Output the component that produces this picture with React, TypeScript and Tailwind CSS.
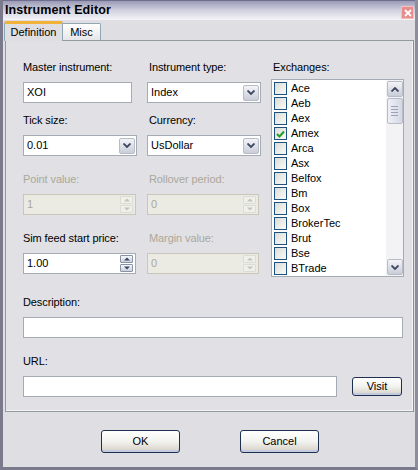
import React from "react";

const font = "font-['Liberation_Sans','Arial',sans-serif]";

function Label({ children, disabled }: { children: React.ReactNode; disabled?: boolean }) {
  return (
    <div className={`h-[14px] text-[11px] leading-[14px] tracking-[-0.1px] ${disabled ? "text-[#aca899]" : "text-black"}`}>
      {children}
    </div>
  );
}

function TextBox({ value, w }: { value?: string; w: string }) {
  return (
    <div className={`${w} h-[21px] border border-[#a5acb5] bg-white flex items-center pl-[3px] text-[11px]`}>
      {value}
    </div>
  );
}

function Chevron({ up, color = "#4d6185" }: { up?: boolean; color?: string }) {
  return (
    <svg width="8" height="5" viewBox="0 0 8 5" className={up ? "rotate-180" : ""}>
      <path d="M0.5 0.5 L4 4 L7.5 0.5" fill="none" stroke={color} strokeWidth="1.8" />
    </svg>
  );
}

function ScrollBtn({ up }: { up?: boolean }) {
  return (
    <div className="w-[16px] h-[16px] rounded-[2px] border border-[#b8bcc6] bg-gradient-to-b from-[#f3f4f8] to-[#c9cdd8] flex items-center justify-center">
      <Chevron up={up} color="#3c4660" />
    </div>
  );
}

function Combo({ value }: { value: string }) {
  return (
    <div className="w-[114px] h-[21px] border border-[#a5acb5] bg-white flex items-center pl-[3px] pr-[1px] text-[11px]">
      <span className="flex-1">{value}</span>
      <ScrollBtn />
    </div>
  );
}

function Spin({ value, disabled, w = "w-[113px]" }: { value: string; disabled?: boolean; w?: string }) {
  const c = disabled ? "#c3c3bf" : "#3c4660";
  return (
    <div
      className={`${w} h-[21px] border flex items-center pl-[3px] pr-[2px] text-[11px] ${
        disabled ? "border-[#c9c7ba] bg-[#ebebe4] text-[#aca899]" : "border-[#a5acb5] bg-white text-black"
      }`}
    >
      <span className="flex-1">{value}</span>
      <div className="flex flex-col gap-[1px]">
        {[true, false].map((up) => (
          <div
            key={String(up)}
            className={`w-[13px] h-[8px] rounded-[1px] border flex items-center justify-center ${
              disabled ? "border-[#dcdcd6] bg-[#f0f0ea]" : "border-[#8a93a6] bg-gradient-to-b from-[#f6f7fa] to-[#cdd1da]"
            }`}
          >
            <svg width="6" height="4" viewBox="0 0 6 4" className={up ? "" : "rotate-180"}>
              <path d="M0 3.5 L3 0.5 L6 3.5 Z" fill={c} />
            </svg>
          </div>
        ))}
      </div>
    </div>
  );
}

function Check({ checked }: { checked?: boolean }) {
  return (
    <div className="w-[13px] h-[13px] border border-[#1c5180] bg-gradient-to-br from-[#dcdcd7] to-[#fafaf8] flex items-center justify-center">
      {checked && (
        <svg width="9" height="8" viewBox="0 0 9 8">
          <path d="M1 4 L3.5 6.5 L8 1.5" fill="none" stroke="#21a121" strokeWidth="2" />
        </svg>
      )}
    </div>
  );
}

function XpButton({ children, w, h }: { children: React.ReactNode; w: string; h: string }) {
  return (
    <div
      className={`${w} ${h} rounded-[3px] border border-[#1f2f4f] bg-gradient-to-b from-[#ffffff] via-[#f2f2ee] to-[#d6d0c5] flex items-center justify-center text-[11px] shadow-[inset_0_-2px_0_#c3cbe0]`}
    >
      {children}
    </div>
  );
}

const exchanges = ["Ace", "Aeb", "Aex", "Amex", "Arca", "Asx", "Belfox", "Bm", "Box", "BrokerTec", "Brut", "Bse", "BTrade"];

export default function App() {
  return (
    <div className={`w-[418px] h-[470px] bg-[#dfdfe3] ${font} text-black flex flex-col border-l-[3px] border-l-[#7a7a8c] border-r-[3px] border-r-[#8d8d9c] border-b-[3px] border-b-[#7a7a8c]`}>
      {/* title bar */}
      <div className="h-[20px] shrink-0 flex items-center justify-between pl-[2px] pr-[1px] bg-gradient-to-b from-[#9a9ab6] via-[#d2d2e0] to-[#f4f4f8] border-t border-t-[#6e6e90]">
        <span className="text-[12.5px] font-bold tracking-[0.1px]">Instrument Editor</span>
        <div className="w-[13px] h-[13px] mt-[4px] bg-[#e88c8c] border border-[#f4c0c0] flex items-center justify-center">
          <svg width="8" height="8" viewBox="0 0 8 8">
            <path d="M1 1 L7 7 M7 1 L1 7" stroke="#ffffff" strokeWidth="1.8" />
          </svg>
        </div>
      </div>

      {/* tabs */}
      <div className="pl-[1px] pt-[1px] h-[20px] flex items-end shrink-0">
        <div className="relative z-10 h-[20px] w-[59px] bg-[#dfdfe3] border border-[#91a7b4] border-b-0 border-t-[3px] border-t-[#f2b23a] rounded-t-[2px] flex items-center justify-center text-[11px] -mb-[1px]">
          Definition
        </div>
        <div className="h-[17px] w-[38px] border border-[#91a7b4] border-b-0 border-l-0 rounded-tr-[2px] bg-gradient-to-b from-[#ffffff] to-[#e6e6ea] flex items-center justify-center text-[11px]">
          Misc
        </div>
      </div>

      {/* panel */}
      <div className="ml-[2px] mr-[1px] h-[372px] border border-[#919b9c] border-r-[#8a8a96] bg-[#e0e0e5] shadow-[inset_-1px_-1px_0_#f4f4f6] pl-[17px] pt-[19px] pr-[9px]">
        <div className="flex">
          <div className="w-[124px]">
            <Label>Master instrument:</Label>
            <div className="mt-[8px]"><TextBox value="XOI" w="w-[109px]" /></div>
            <div className="mt-[10px]"><Label>Tick size:</Label></div>
            <div className="mt-[8px]"><Combo value="0.01" /></div>
            <div className="mt-[16px]"><Label disabled>Point value:</Label></div>
            <div className="mt-[8px]"><Spin value="1" disabled /></div>
            <div className="mt-[16px]"><Label>Sim feed start price:</Label></div>
            <div className="mt-[8px]"><Spin value="1.00" /></div>
          </div>
          <div className="w-[124px]">
            <div className="pl-[2px]"><Label>Instrument type:</Label></div>
            <div className="mt-[8px]"><Combo value="Index" /></div>
            <div className="mt-[10px] pl-[2px]"><Label>Currency:</Label></div>
            <div className="mt-[8px]"><Combo value="UsDollar" /></div>
            <div className="mt-[16px] pl-[2px]"><Label disabled>Rollover period:</Label></div>
            <div className="mt-[8px]"><Spin value="0" disabled w="w-[112px]" /></div>
            <div className="mt-[16px] pl-[2px]"><Label disabled>Margin value:</Label></div>
            <div className="mt-[8px]"><Spin value="0" disabled w="w-[112px]" /></div>
          </div>
          <div className="flex-1">
            <div className="pl-[2px]"><Label>Exchanges:</Label></div>
            <div className="mt-[5px] h-[198px] border border-[#a5acb5] bg-white flex">
              <div className="flex-1 pl-[2px] pt-[1px] flex flex-col">
                {exchanges.map((e) => (
                  <div key={e} className="h-[15px] flex items-center gap-[4px] text-[11px]">
                    <Check checked={e === "Amex"} />
                    <span>{e}</span>
                  </div>
                ))}
              </div>
              <div className="w-[17px] bg-[#f3f3f5] flex flex-col items-center justify-between py-[1px]">
                <div className="flex flex-col items-center gap-[1px]">
                  <ScrollBtn up />
                  <div className="w-[16px] h-[26px] rounded-[2px] border border-[#b8bcc6] bg-gradient-to-r from-[#eef0f6] to-[#d4d8e4] flex flex-col items-center justify-center gap-[2px]">
                    <div className="w-[7px] h-px bg-[#9aa2b8]" />
                    <div className="w-[7px] h-px bg-[#9aa2b8]" />
                    <div className="w-[7px] h-px bg-[#9aa2b8]" />
                    <div className="w-[7px] h-px bg-[#9aa2b8]" />
                  </div>
                </div>
                <ScrollBtn />
              </div>
            </div>
          </div>
        </div>

        <div className="mt-[18px]"><Label>Description:</Label></div>
        <div className="mt-[8px]"><TextBox w="w-[380px]" /></div>
        <div className="mt-[16px]"><Label>URL:</Label></div>
        <div className="mt-[8px] flex items-center gap-[15px]">
          <TextBox w="w-[314px]" />
          <XpButton w="w-[50px]" h="h-[19px]">Visit</XpButton>
        </div>
      </div>

      {/* footer buttons */}
      <div className="flex-1 flex items-center justify-center gap-[60px] pl-[2px] pt-[4px]">
        <XpButton w="w-[79px]" h="h-[23px]">OK</XpButton>
        <XpButton w="w-[79px]" h="h-[23px]">Cancel</XpButton>
      </div>
    </div>
  );
}
